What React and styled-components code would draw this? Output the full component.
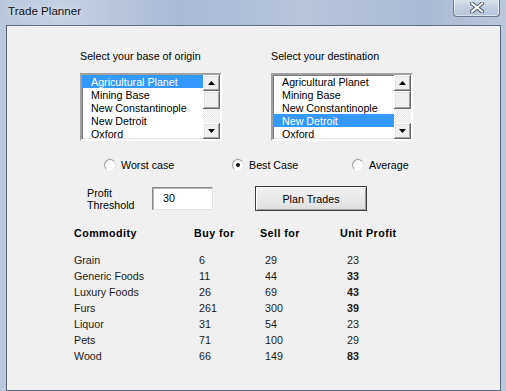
import React from "react";
import styled, { createGlobalStyle } from "styled-components";

const GlobalStyle = createGlobalStyle`
  html, body {
    margin: 0;
    padding: 0;
    width: 506px;
    height: 391px;
    overflow: hidden;
    background: #a9bad3;
  }
  body {
    font-family: "Liberation Sans", Arial, sans-serif;
    font-size: 10.7px;
    color: #000;
  }
`;

const Window = styled.div`
  width: 506px;
  height: 391px;
  display: flex;
  flex-direction: column;
  background: linear-gradient(90deg, #b7c7dd 0%, #c3d1e4 12%, #a8bbd5 35%, #b3c4db 60%, #a9bbd4 85%, #b9c8dd 100%);
`;

const TitleBar = styled.div`
  height: 25px;
  display: flex;
  align-items: flex-start;
  flex-shrink: 0;
`;

const Title = styled.div`
  padding: 4px 0 0 8px;
  font-size: 11.6px;
  color: #111;
  text-shadow: 0 0 6px rgba(255, 255, 255, 0.9);
`;

const CloseButton = styled.div`
  margin-left: auto;
  margin-right: 6px;
  margin-top: -1px;
  width: 45px;
  height: 17px;
  border: 1px solid #6a798e;
  border-top: none;
  border-radius: 0 0 4px 4px;
  background: linear-gradient(180deg, #d9e3ef 0%, #c1cfe2 50%, #b3c3da 100%);
  box-shadow: inset 0 0 0 1px rgba(255, 255, 255, 0.5);
  display: flex;
  align-items: center;
  justify-content: center;
`;

const Client = styled.div`
  margin: 0 5px 0 6px;
  height: 380px;
  border: 1px solid #5d6a7d;
  background: #f0f0f0;
  padding-top: 24px;
  box-sizing: border-box;
`;

const ListsRow = styled.div`
  display: flex;
  gap: 49px;
  padding-left: 73px;
`;

const ListGroup = styled.div`
  display: flex;
  flex-direction: column;
  gap: 10px;
`;

const Label = styled.div`
  line-height: 13px;
  height: 13px;
  white-space: nowrap;
`;

const ListBox = styled.div`
  width: 142px;
  height: 68px;
  box-sizing: border-box;
  border: 2px solid;
  border-color: #a0a0a0 #ffffff #ffffff #a0a0a0;
  box-shadow: inset 1px 1px #7a7a7a, inset -1px -1px #e3e3e3;
  background: #fff;
  display: flex;
`;

const Items = styled.div`
  flex: 1;
`;

const Item = styled.div`
  height: 13px;
  line-height: 15px;
  padding-left: 9px;
  white-space: nowrap;
  background: ${(p) => (p.$selected ? "#3399ff" : "transparent")};
  color: ${(p) => (p.$selected ? "#fff" : "#000")};
`;

const ScrollBar = styled.div`
  width: 17px;
  display: flex;
  flex-direction: column;
`;

const raised = `
  background: #f0f0f0;
  box-shadow: inset -1px -1px #696969, inset 1px 1px #ffffff,
    inset -2px -2px #a0a0a0, inset 2px 2px #e3e3e3;
`;

const ScrollButton = styled.div`
  height: 16px;
  ${raised}
  display: flex;
  align-items: center;
  justify-content: center;
`;

const Thumb = styled.div`
  height: 18px;
  ${raised}
`;

const Track = styled.div`
  flex: 1;
  background: repeating-conic-gradient(#ffffff 0 25%, #e4e4e4 0 50%) 0 0 / 2px 2px;
`;

const RadioRow = styled.div`
  display: grid;
  grid-template-columns: 128px 120px auto;
  padding-left: 97px;
  margin-top: 17px;
`;

const RadioOption = styled.label`
  display: flex;
  align-items: center;
  gap: 5px;
  height: 14px;
  line-height: 14px;
`;

const RadioCircle = styled.span`
  width: 12px;
  height: 12px;
  box-sizing: border-box;
  border-radius: 50%;
  border: 1px solid;
  border-color: #9a9a9a #e2e2e2 #f4f4f4 #9a9a9a;
  background: radial-gradient(circle at 60% 60%, #ffffff 0 55%, #eeeeee 100%);
  display: flex;
  align-items: center;
  justify-content: center;

  &::after {
    content: "";
    width: 4px;
    height: 4px;
    border-radius: 50%;
    background: ${(p) => (p.$checked ? "#111" : "transparent")};
  }
`;

const ThresholdRow = styled.div`
  display: flex;
  align-items: flex-start;
  padding-left: 80px;
  margin-top: 14px;
`;

const ThresholdLabel = styled.div`
  width: 65px;
  line-height: 12px;
  padding-top: 1px;
`;

const TextBox = styled.div`
  width: 61px;
  height: 23px;
  margin-top: 1px;
  box-sizing: border-box;
  border: 1px solid;
  border-color: #8a8a8a #e3e3e3 #e3e3e3 #8a8a8a;
  box-shadow: inset 1px 1px #b5b5b5;
  background: #fff;
  padding-left: 10px;
  line-height: 21px;
`;

const Button = styled.div`
  width: 112px;
  height: 25px;
  margin-left: 42px;
  box-sizing: border-box;
  border: 1px solid #3c3c3c;
  background: linear-gradient(180deg, #f3f3f3 0%, #e9e9e9 50%, #dedede 100%);
  box-shadow: inset 1px 1px #ffffff, inset -1px -1px #a0a0a0;
  display: flex;
  align-items: center;
  justify-content: center;
`;

const Table = styled.div`
  display: grid;
  grid-template-columns: 120px 66px 80px 1fr;
  grid-template-rows: 27px;
  grid-auto-rows: 16px;
  padding-left: 67px;
  margin-top: 14px;
`;

const HeadCell = styled.div`
  font-weight: bold;
  letter-spacing: 0.45px;
  line-height: 16px;
  align-self: start;
  white-space: nowrap;
`;

const Cell = styled.div`
  line-height: 16px;
  padding-left: ${(p) => p.$indent || 0}px;
  font-weight: ${(p) => (p.$bold ? "bold" : "normal")};
  color: #1a1a1a;
  white-space: nowrap;
`;

const places = [
  "Agricultural Planet",
  "Mining Base",
  "New Constantinople",
  "New Detroit",
  "Oxford",
];

const trades = [
  { name: "Grain", buy: 6, sell: 29 },
  { name: "Generic Foods", buy: 11, sell: 44 },
  { name: "Luxury Foods", buy: 26, sell: 69 },
  { name: "Furs", buy: 261, sell: 300 },
  { name: "Liquor", buy: 31, sell: 54 },
  { name: "Pets", buy: 71, sell: 100 },
  { name: "Wood", buy: 66, sell: 149 },
];

const threshold = 30;

function Arrow({ up }) {
  return (
    <svg width="7" height="4" viewBox="0 0 7 4">
      <path d={up ? "M3.5 0 L7 4 L0 4 Z" : "M0 0 L7 0 L3.5 4 Z"} fill="#000" />
    </svg>
  );
}

function List({ label, selected }) {
  return (
    <ListGroup>
      <Label>{label}</Label>
      <ListBox>
        <Items>
          {places.map((p) => (
            <Item key={p} $selected={p === selected}>
              {p}
            </Item>
          ))}
        </Items>
        <ScrollBar>
          <ScrollButton>
            <Arrow up />
          </ScrollButton>
          <Thumb />
          <Track />
          <ScrollButton>
            <Arrow />
          </ScrollButton>
        </ScrollBar>
      </ListBox>
    </ListGroup>
  );
}

export default function App() {
  return (
    <>
      <GlobalStyle />
      <Window>
        <TitleBar>
          <Title>Trade Planner</Title>
          <CloseButton>
            <svg width="14" height="11" viewBox="0 0 14 11">
              <path d="M2 1.5 L12 9.5 M12 1.5 L2 9.5" stroke="#4a5566" strokeWidth="4" strokeLinecap="square" />
              <path d="M2 1.5 L12 9.5 M12 1.5 L2 9.5" stroke="#ffffff" strokeWidth="2" strokeLinecap="square" />
            </svg>
          </CloseButton>
        </TitleBar>
        <Client>
          <ListsRow>
            <List label="Select your base of origin" selected="Agricultural Planet" />
            <List label="Select your destination" selected="New Detroit" />
          </ListsRow>
          <RadioRow>
            <RadioOption>
              <RadioCircle />
              Worst case
            </RadioOption>
            <RadioOption>
              <RadioCircle $checked />
              Best Case
            </RadioOption>
            <RadioOption>
              <RadioCircle />
              Average
            </RadioOption>
          </RadioRow>
          <ThresholdRow>
            <ThresholdLabel>
              Profit
              <br />
              Threshold
            </ThresholdLabel>
            <TextBox>{threshold}</TextBox>
            <Button>Plan Trades</Button>
          </ThresholdRow>
          <Table>
            <HeadCell>Commodity</HeadCell>
            <HeadCell>Buy for</HeadCell>
            <HeadCell>Sell for</HeadCell>
            <HeadCell>Unit Profit</HeadCell>
            {trades.map((t) => {
              const profit = t.sell - t.buy;
              return (
                <React.Fragment key={t.name}>
                  <Cell>{t.name}</Cell>
                  <Cell $indent={5}>{t.buy}</Cell>
                  <Cell $indent={5}>{t.sell}</Cell>
                  <Cell $indent={7} $bold={profit > threshold}>
                    {profit}
                  </Cell>
                </React.Fragment>
              );
            })}
          </Table>
        </Client>
      </Window>
    </>
  );
}
